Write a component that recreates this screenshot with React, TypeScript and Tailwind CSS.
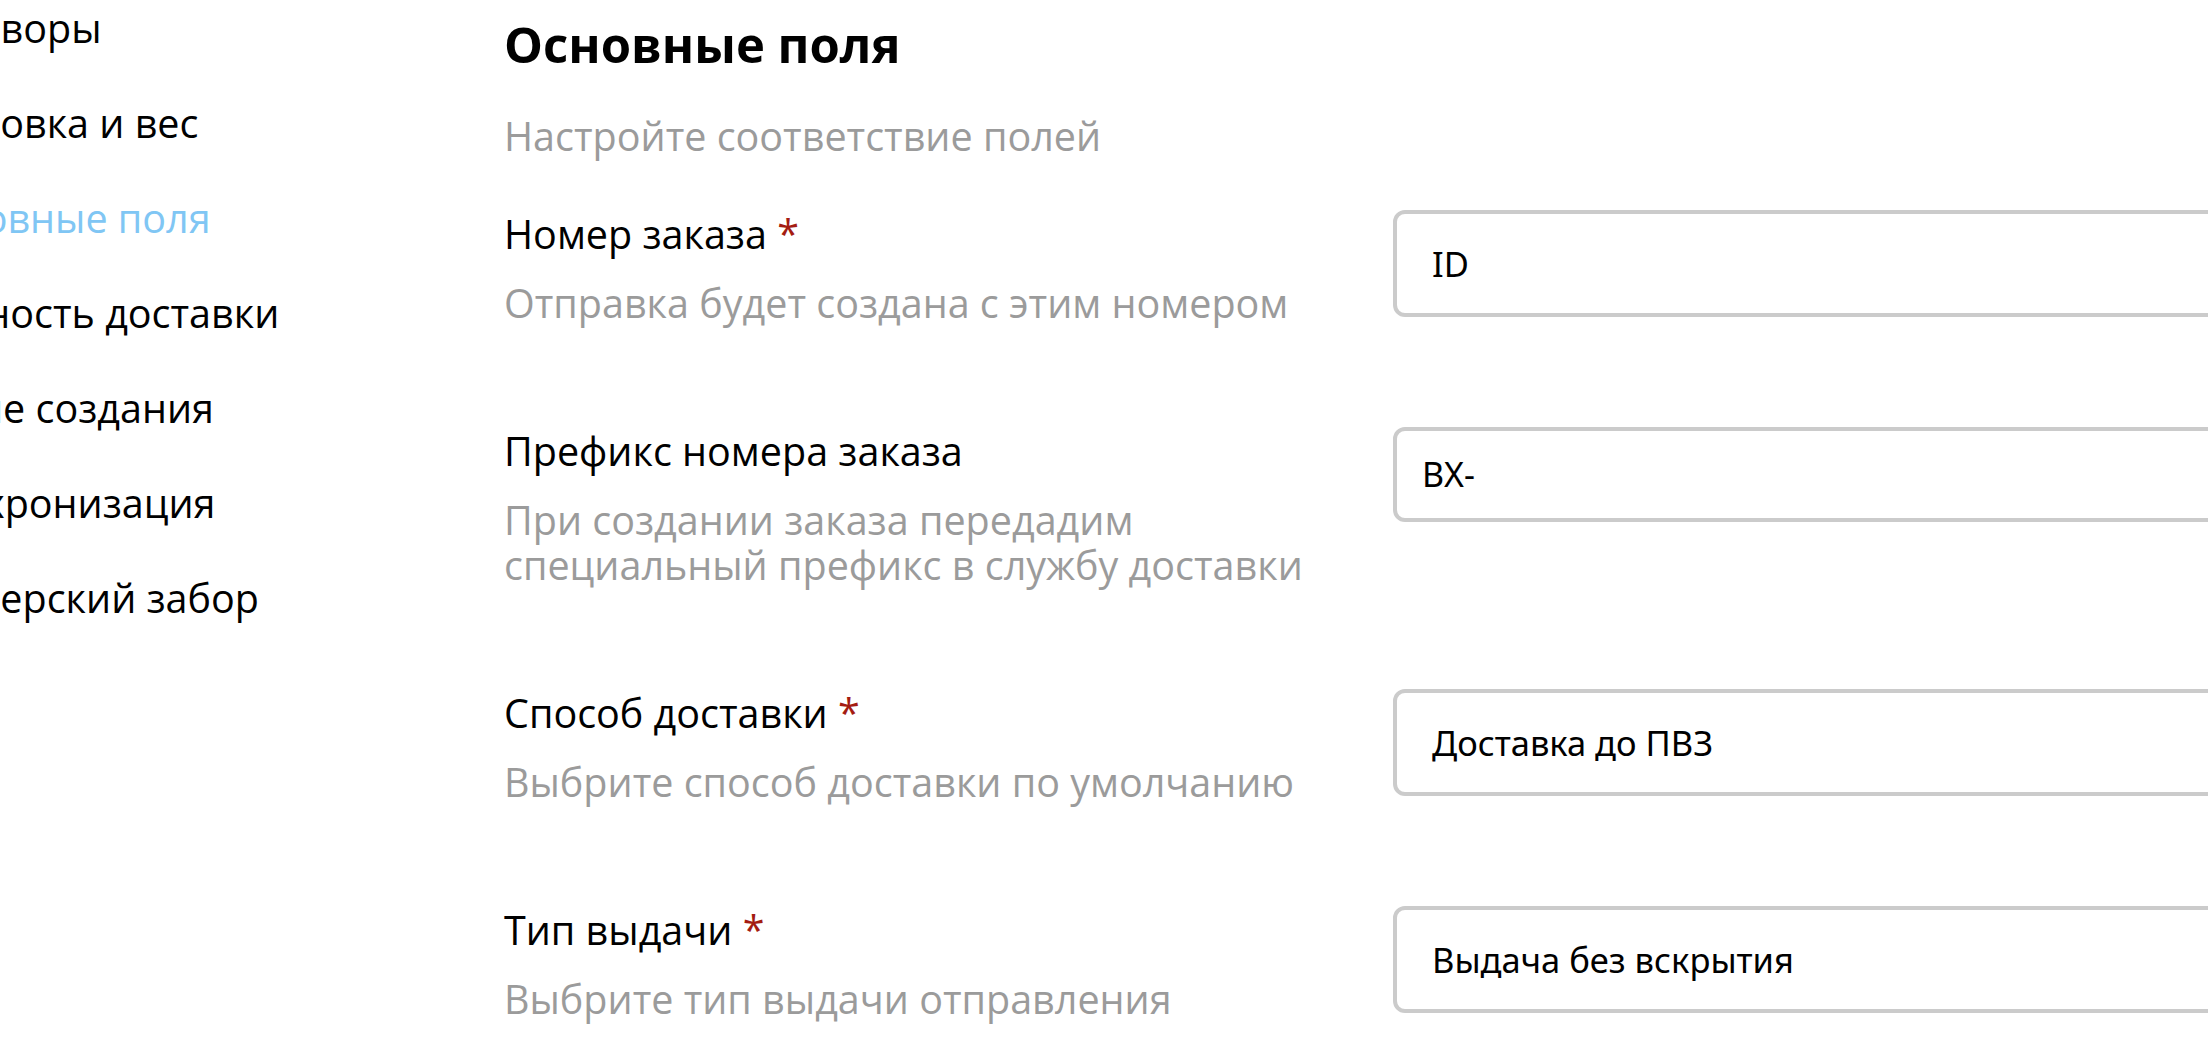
import React from "react";

const navItems = [
  { label: "Договоры", active: false },
  { label: "Упаковка и вес", active: false },
  { label: "Основные поля", active: true },
  { label: "Ценность доставки", active: false },
  { label: "После создания", active: false },
  { label: "Синхронизация", active: false },
  { label: "Курьерский забор", active: false },
];

type Row = {
  label: string;
  required: boolean;
  hint: string[];
  value: string;
  kind: "select" | "input";
};

const rows: Row[] = [
  { label: "Номер заказа", required: true, hint: ["Отправка будет создана с этим номером"], value: "ID", kind: "select" },
  {
    label: "Префикс номера заказа",
    required: false,
    hint: ["При создании заказа передадим", "специальный префикс в службу доставки"],
    value: "BX-",
    kind: "input",
  },
  { label: "Способ доставки", required: true, hint: ["Выбрите способ доставки по умолчанию"], value: "Доставка до ПВЗ", kind: "select" },
  { label: "Тип выдачи", required: true, hint: ["Выбрите тип выдачи отправления"], value: "Выдача без вскрытия", kind: "select" },
];

export default function App() {
  return (
    <div
      className="w-[2208px] h-[1056px] overflow-hidden bg-white flex"
      style={{ fontFamily: '"Open Sans", "Noto Sans", sans-serif' }}
    >
      <nav className="w-[504px] shrink-0">
        <ul className="-ml-[91px] pt-[4px] flex flex-col gap-[47px] whitespace-nowrap">
          {navItems.map((n) => (
            <li
              key={n.label}
              className={`text-[39.5px] leading-[48px] ${n.active ? "text-[#80c6f4]" : "text-black"}`}
            >
              {n.label}
            </li>
          ))}
        </ul>
      </nav>
      <main className="flex-1 pt-[15px]">
        <h2 className="text-[49px] leading-[58px] font-bold text-black">Основные поля</h2>
        <p className="mt-[41px] text-[39.5px] leading-[45px] text-[#9b9b9b]">Настройте соответствие полей</p>
        <div className="mt-[51px] flex flex-col gap-[101px]">
          {rows.map((r) => (
            <div key={r.label} className="flex items-start">
              <div className="w-[889px] shrink-0">
                <div className="text-[39.5px] leading-[48px] text-black whitespace-nowrap">
                  {r.label}
                  {r.required && <span className="text-[#a41c12]"> *</span>}
                </div>
                <div className="mt-[23px] text-[39.5px] leading-[45px] text-[#9b9b9b]">
                  {r.hint.map((h) => (
                    <div key={h} className="whitespace-nowrap">
                      {h}
                    </div>
                  ))}
                </div>
              </div>
              {r.kind === "select" ? (
                <div
                  className="w-[1000px] shrink-0 h-[107px] border-4 border-[#cbcbcb] rounded-[12px] flex items-center pl-[35px] text-[34.5px] text-black bg-white"
                  style={{ fontFamily: '"Noto Sans", "Open Sans", sans-serif' }}
                >
                  {r.value}
                </div>
              ) : (
                <div
                  className="w-[1000px] shrink-0 h-[95px] border-4 border-[#cbcbcb] rounded-[12px] flex items-center pl-[25px] text-[34px] text-black bg-white"
                  style={{ fontFamily: '"Noto Sans", "Open Sans", sans-serif' }}
                >
                  {r.value}
                </div>
              )}
            </div>
          ))}
        </div>
      </main>
    </div>
  );
}
